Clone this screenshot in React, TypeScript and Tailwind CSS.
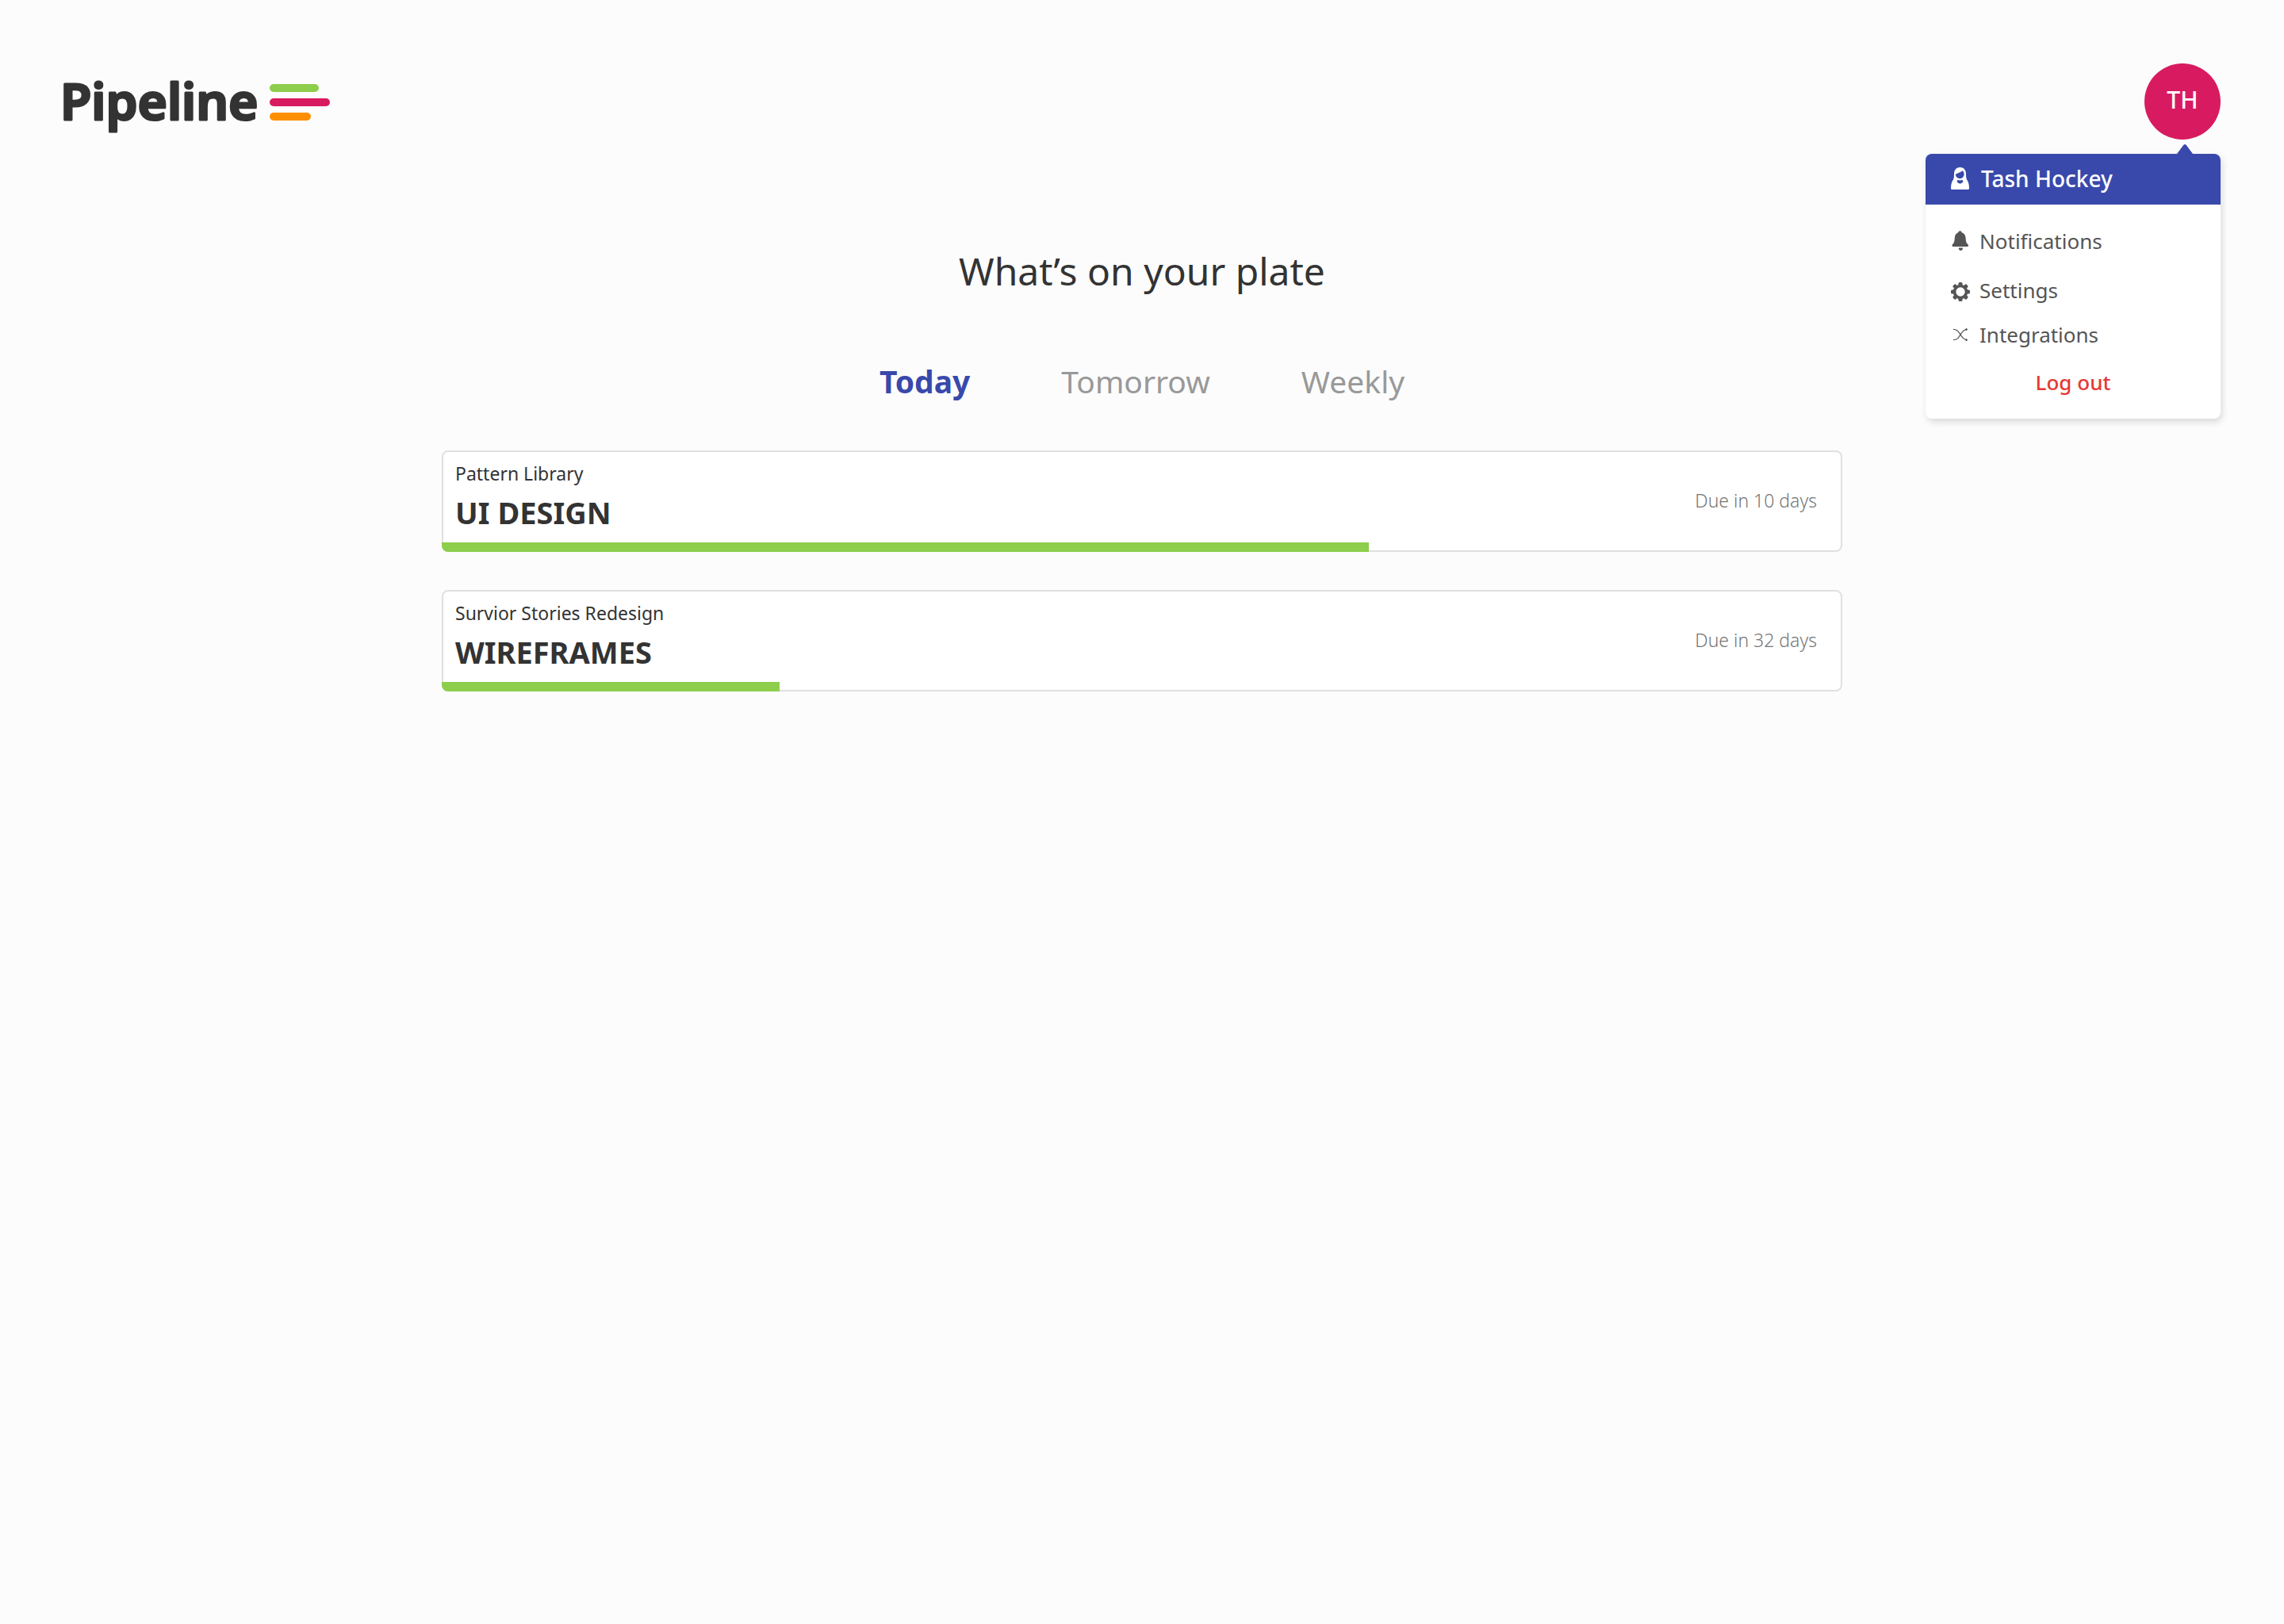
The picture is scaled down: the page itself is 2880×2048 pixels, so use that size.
import type { ReactNode } from "react";

function Logo() {
  return (
    <svg className="h-[92px] w-[344px]" viewBox="-6 -18 344 92" role="img" aria-label="Pipeline">
      <text
        x="-4"
        y="53"
        fontSize="64"
        className="fill-[#333333] stroke-[#333333] font-semibold"
        strokeWidth="3"
        strokeLinejoin="round"
      >
        Pipeline
      </text>
      <rect x="260" y="8" width="62" height="10" rx="5" fill="#8dce4c" />
      <rect x="260" y="26" width="76" height="10" rx="5" fill="#d81b60" />
      <rect x="260" y="44" width="52" height="10" rx="5" fill="#ff8f00" />
    </svg>
  );
}

function PersonIcon() {
  return (
    <svg className="h-7 w-6" viewBox="0 0 24 28" fill="currentColor" aria-hidden="true">
      <path
        fillRule="evenodd"
        d="M11.5 0C7 0 4 3 4 8.500c0 2.800-.2 4.700-.8 6.500C1.200 17.500 0 21.500 0 26.200C0 27.500.6 28 1.800 28h19.400c1.200 0 1.800-.5 1.800-1.800 0-4.700-1.200-8.700-3.200-11.200-.6-1.800-.8-3.700-.8-6.500C19 3 16 0 11.500 0Z
        M6.500 8.200C9.500 7.600 12 6 15 4.300c1 1.100 1.600 2.600 1.600 4.500 0 3-2.300 5.400-5.100 5.400S6 12 6 9.500Z
        M8.600 15.800c1.900 1 3.900 1 5.800 0l1.100 2.400c-1.200 1.100-2.400 1.900-4 2.600-1.600-.7-2.800-1.500-4-2.600Z"
      />
    </svg>
  );
}

function BellIcon() {
  return (
    <svg className="h-7 w-6" viewBox="0 0 24 28" fill="currentColor" aria-hidden="true">
      <path d="M11.500 1.200c1.300 0 2.200.8 2.300 2 3 1 4.600 3.500 4.800 6.600.2 4.700.9 6.800 2.700 8.300.5.500.7.900.7 1.400 0 1-.7 1.500-1.600 1.500H3c-1 0-1.600-.6-1.600-1.500 0-.5.200-.9.700-1.400 1.800-1.500 2.500-3.600 2.700-8.300.1-3.100 1.600-5.600 4.400-6.600.1-1.200 1-2 2.300-2Z" />
      <path d="M9.800 22.500h5.100v.8c0 1.500-1 2.700-2.500 2.700s-2.600-1.200-2.600-2.700Z" />
    </svg>
  );
}

function GearIcon() {
  return (
    <svg className="h-7 w-6" viewBox="0 -4 24 28" aria-hidden="true">
      <g fill="currentColor">
        <rect x="9.500" y="0" width="5" height="24" rx="1.500" />
        <rect x="9.500" y="0" width="5" height="24" rx="1.500" transform="rotate(45 12 12)" />
        <rect x="9.500" y="0" width="5" height="24" rx="1.500" transform="rotate(90 12 12)" />
        <rect x="9.500" y="0" width="5" height="24" rx="1.500" transform="rotate(135 12 12)" />
        <circle cx="12" cy="12" r="9.300" />
      </g>
      <circle cx="12" cy="12" r="5.700" fill="#ffffff" />
    </svg>
  );
}

function ShuffleIcon() {
  return (
    <svg className="size-6" viewBox="0 0 24 24" aria-hidden="true">
      <g fill="none" stroke="currentColor" strokeWidth="1.200">
        <path d="M3 5.400C8.500 5.400 9.700 8.700 12 12s4 6.700 8.500 6.700" />
        <path d="M3 18.700C8.500 18.700 9.700 15.400 12 12s4-6.600 8.500-6.600" />
      </g>
      <path d="M18.800 3.400 21.300 5.400l-2.500 2ZM18.800 16.700l2.500 2-2.500 2Z" fill="currentColor" />
    </svg>
  );
}

function MenuItem({ icon, label, className }: { icon: ReactNode; label: string; className: string }) {
  return (
    <a
      href="#"
      role="menuitem"
      className={`flex items-center gap-3 pl-8 text-[26px] leading-9 text-[#555555] ${className}`}
    >
      {icon}
      {label}
    </a>
  );
}

function AccountMenu() {
  return (
    <div className="relative">
      <button
        type="button"
        aria-haspopup="menu"
        aria-expanded="true"
        className="flex size-24 items-center justify-center rounded-full bg-[#d81b60] pb-1 text-[30px] leading-10 font-medium text-white"
      >
        TH
      </button>
      <div
        role="menu"
        className="absolute top-[114px] right-0 w-[372px] rounded-lg bg-white pb-7 shadow-[2px_4px_8px_rgba(0,0,0,0.14)]"
      >
        <svg className="absolute -top-3 right-[35px] h-3 w-5" viewBox="0 0 20 12" aria-hidden="true">
          <path d="M0 12 8.200 1.100Q10-1 11.800 1.100L20 12Z" fill="#3949ab" />
        </svg>
        <a
          href="#"
          role="menuitem"
          className="flex h-16 items-center gap-3.5 rounded-t-lg bg-[#3949ab] pb-0.5 pl-8 text-[28px] leading-10 font-medium text-white"
        >
          <PersonIcon />
          Tash Hockey
        </a>
        <MenuItem icon={<BellIcon />} label="Notifications" className="mt-7" />
        <MenuItem icon={<GearIcon />} label="Settings" className="mt-[26px]" />
        <MenuItem icon={<ShuffleIcon />} label="Integrations" className="mt-5" />
        <button
          type="button"
          role="menuitem"
          className="mt-6 block w-full text-center text-[26px] leading-9 font-medium text-[#e53935]"
        >
          Log out
        </button>
      </div>
    </div>
  );
}

const tasks = [
  { project: "Pattern Library", title: "UI DESIGN", due: "Due in 10 days", progress: 66.2 },
  { project: "Survior Stories Redesign", title: "WIREFRAMES", due: "Due in 32 days", progress: 24.1 },
];

function TaskCard({ project, title, due, progress }: (typeof tasks)[number]) {
  return (
    <li className="relative flex items-center justify-between rounded-lg border-2 border-[#e0e0e0] bg-white pt-[11px] pr-[30px] pb-[25px] pl-[15px]">
      <div>
        <p className="text-[23px] leading-8">{project}</p>
        <h2 className="mt-2.5 text-[38px] leading-[46px] font-bold">{title}</h2>
      </div>
      <p className="pt-3 text-[23px] leading-8 font-light text-[#757575]">{due}</p>
      <div className="absolute -inset-0.5 flex items-end overflow-hidden rounded-lg">
        <div
          role="progressbar"
          aria-label={`${title} progress`}
          aria-valuenow={Math.round(progress)}
          aria-valuemin={0}
          aria-valuemax={100}
          className="h-3 bg-[#8dce4c]"
          style={{ width: `${progress}%` }}
        />
      </div>
    </li>
  );
}

export default function App() {
  return (
    <div className="min-h-screen bg-[#fcfcfc] font-['Noto_Sans',sans-serif] text-[#333333]">
      <header className="flex items-start justify-between pt-20 pr-20 pl-[74px]">
        <a href="#">
          <Logo />
        </a>
        <AccountMenu />
      </header>
      <main className="mx-auto w-full max-w-[1766px] pt-[138px]">
        <h1 className="text-center text-5xl leading-14">What’s on your plate</h1>
        <div role="tablist" className="mt-[87px] flex justify-center gap-[115px] text-[39px] leading-12">
          <button type="button" role="tab" aria-selected="true" className="font-bold text-[#3949ab]">
            Today
          </button>
          <button type="button" role="tab" aria-selected="false" className="text-[#999999]">
            Tomorrow
          </button>
          <button type="button" role="tab" aria-selected="false" className="text-[#999999]">
            Weekly
          </button>
        </div>
        <ul className="mt-[63px] flex flex-col gap-12">
          {tasks.map((task) => (
            <TaskCard key={task.title} {...task} />
          ))}
        </ul>
      </main>
    </div>
  );
}
